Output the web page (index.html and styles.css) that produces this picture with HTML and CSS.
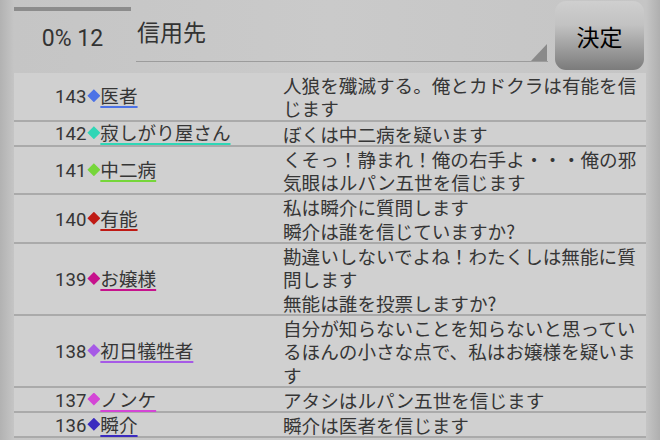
FILE: index.html
```html
<!DOCTYPE html>
<html lang="ja">
<head>
<meta charset="utf-8">
<link rel="stylesheet" href="styles.css">
</head>
<body>
<div class="screen">
  <header class="top">
    <div class="progress">
      <div class="bar"></div>
      <div class="count">0% 12</div>
    </div>
    <div class="spinner"><span class="spinner-text">信用先</span><span class="arrow"></span></div>
    <button class="ok">決定</button>
  </header>
  <div class="list">
    <div class="row">
      <div class="who"><span class="line"><span class="no">143</span><span class="dia c1"></span><span class="name c1">医者</span></span></div>
      <div class="msg">人狼を殲滅する。俺とカドクラは有能を信じます</div>
    </div>
    <div class="row">
      <div class="who"><span class="line"><span class="no">142</span><span class="dia c2"></span><span class="name c2">寂しがり屋さん</span></span></div>
      <div class="msg">ぼくは中二病を疑います</div>
    </div>
    <div class="row">
      <div class="who"><span class="line"><span class="no">141</span><span class="dia c3"></span><span class="name c3">中二病</span></span></div>
      <div class="msg">くそっ！静まれ！俺の右手よ・・・俺の邪気眼はルパン五世を信じます</div>
    </div>
    <div class="row">
      <div class="who"><span class="line"><span class="no">140</span><span class="dia c4"></span><span class="name c4">有能</span></span></div>
      <div class="msg">私は瞬介に質問します<br>瞬介は誰を信じていますか?</div>
    </div>
    <div class="row">
      <div class="who"><span class="line"><span class="no">139</span><span class="dia c5"></span><span class="name c5">お嬢様</span></span></div>
      <div class="msg">勘違いしないでよね！わたくしは無能に質問します<br>無能は誰を投票しますか?</div>
    </div>
    <div class="row">
      <div class="who"><span class="line"><span class="no">138</span><span class="dia c6"></span><span class="name c6">初日犠牲者</span></span></div>
      <div class="msg">自分が知らないことを知らないと思っているほんの小さな点で、私はお嬢様を疑います</div>
    </div>
    <div class="row">
      <div class="who"><span class="line"><span class="no">137</span><span class="dia c7"></span><span class="name c7">ノンケ</span></span></div>
      <div class="msg">アタシはルパン五世を信じます</div>
    </div>
    <div class="row">
      <div class="who"><span class="line"><span class="no">136</span><span class="dia c8"></span><span class="name c8">瞬介</span></span></div>
      <div class="msg">瞬介は医者を信じます</div>
    </div>
  </div>
</div>
</body>
</html>
```
FILE: styles.css
```css
html, body {
  margin: 0;
  padding: 0;
}
body {
  width: 660px;
  height: 440px;
  overflow: hidden;
  background: linear-gradient(90deg, #b2b2b2 0, #c5c5c5 14px, #cacaca 50%, #c5c5c5 646px, #afafaf 100%);
  font-family: "Noto Sans CJK JP", "Noto Sans", sans-serif;
  color: #363636;
}
.top {
  display: flex;
  height: 73px;
  padding-left: 14px;
}
.progress {
  width: 117px;
  padding-top: 7px;
}
.bar {
  height: 4px;
  background: #8c8c8c;
}
.count {
  margin-top: 14px;
  font-family: Roboto, "Liberation Sans", sans-serif;
  font-size: 23px;
  line-height: 27px;
  text-align: center;
  color: #333;
}
.spinner {
  position: relative;
  margin-left: 5px;
  width: 412px;
  height: 61px;
  border-bottom: 1px solid #9c9c9c;
}
.spinner-text {
  display: block;
  padding: 16px 0 0 1px;
  font-size: 23px;
  line-height: 30px;
  color: #333;
}
.arrow {
  position: absolute;
  right: 1px;
  bottom: 0;
  width: 16px;
  height: 17px;
  background: #8a8a8a;
  clip-path: polygon(100% 0, 100% 100%, 0 100%);
}
.ok {
  margin: 1px 0 0 7px;
  width: 89px;
  height: 69px;
  padding: 0;
  border: none;
  border-radius: 11px;
  background: linear-gradient(180deg, #cfcfcf 0%, #c2c2c2 35%, #7b7b7b 100%);
  font-family: "Noto Sans CJK JP", sans-serif;
  font-size: 23px;
  line-height: 30px;
  color: #000;
}
.list {
  margin-left: 14px;
  width: 632px;
}
.row {
  display: grid;
  grid-template-columns: 266px 1fr;
  background: #d0d0d0;
  border-top: 2px solid #aaaaaa;
  font-size: 18.6px;
}
.row:first-child {
  border-top: none;
}
.row:last-child {
  border-bottom: 2px solid #aaaaaa;
}
.who {
  display: flex;
  align-items: center;
  padding-left: 41px;
  line-height: 18px;
}
.line {
  display: block;
  white-space: nowrap;
}
.no {
  font-family: Roboto, "Liberation Sans", sans-serif;
}
.dia {
  display: inline-block;
  width: 13px;
  height: 13px;
  margin-left: 1px;
  vertical-align: 1px;
  clip-path: polygon(50% 0, 100% 50%, 50% 100%, 0 50%);
}
.name {
  text-decoration-line: underline;
  text-decoration-thickness: 2px;
  text-underline-offset: 3px;
}
.msg {
  padding-left: 3px;
  line-height: 23.3px;
}
.dia.c1 { background: #4c72e6; }
.name.c1 { text-decoration-color: #4c72e6; }
.dia.c2 { background: #2fd6b6; }
.name.c2 { text-decoration-color: #2fd6b6; }
.dia.c3 { background: #76d63a; }
.name.c3 { text-decoration-color: #76d63a; }
.dia.c4 { background: #bf1a14; }
.name.c4 { text-decoration-color: #bf1a14; }
.dia.c5 { background: #c6128c; }
.name.c5 { text-decoration-color: #c6128c; }
.dia.c6 { background: #a65ae6; }
.name.c6 { text-decoration-color: #a65ae6; }
.dia.c7 { background: #d446d6; }
.name.c7 { text-decoration-color: #d446d6; }
.dia.c8 { background: #3a2abf; }
.name.c8 { text-decoration-color: #3a2abf; }
```
